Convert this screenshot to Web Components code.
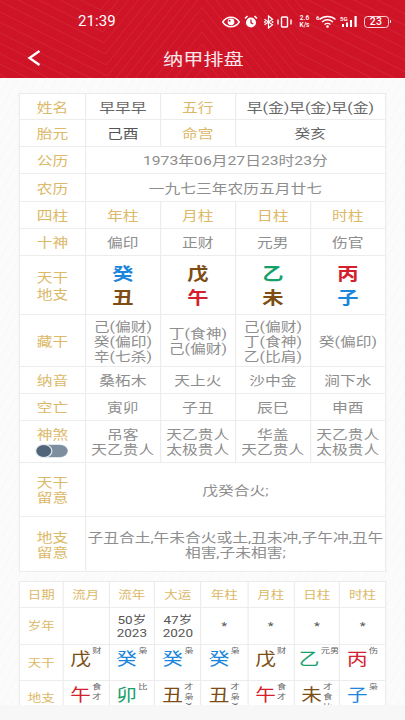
<!DOCTYPE html>
<html lang="zh"><head><meta charset="utf-8">
<style>
html,body{margin:0;padding:0;background:#f8f8f8;font-family:Roboto,"Noto Sans CJK SC","Noto Sans",sans-serif;}
bz-line{display:block;white-space:nowrap}
</style></head>
<body>
<bz-app>
  <bz-header slot="top" title="纳甲排盘"></bz-header>
  <bz-grid cols="51.6px 59px 59px 59px 59px" rows="25px 26px 26px 27px 26px 26px 58px 51px 26px 26px 41px 53px 54px">
    <bz-cell label>姓名</bz-cell><bz-cell dark>早早早</bz-cell><bz-cell label>五行</bz-cell><bz-cell span="2" dark>早(金)早(金)早(金)</bz-cell>
    <bz-cell label>胎元</bz-cell><bz-cell darker>己酉</bz-cell><bz-cell label>命宫</bz-cell><bz-cell span="2" dark>癸亥</bz-cell>
    <bz-cell label>公历</bz-cell><bz-cell span="4">1973年06月27日23时23分</bz-cell>
    <bz-cell label>农历</bz-cell><bz-cell span="4">一九七三年农历五月廿七</bz-cell>
    <bz-cell label>四柱</bz-cell><bz-cell label>年柱</bz-cell><bz-cell label>月柱</bz-cell><bz-cell label>日柱</bz-cell><bz-cell label>时柱</bz-cell>
    <bz-cell label>十神</bz-cell><bz-cell>偏印</bz-cell><bz-cell>正财</bz-cell><bz-cell>元男</bz-cell><bz-cell>伤官</bz-cell>
    <bz-cell label tall><bz-line>天干</bz-line><bz-line>地支</bz-line></bz-cell>
    <bz-cell><bz-pillar top="癸" bottom="丑" tc="water" bc="earth"></bz-pillar></bz-cell>
    <bz-cell><bz-pillar top="戊" bottom="午" tc="earth" bc="fire"></bz-pillar></bz-cell>
    <bz-cell><bz-pillar top="乙" bottom="未" tc="wood" bc="earth"></bz-pillar></bz-cell>
    <bz-cell><bz-pillar top="丙" bottom="子" tc="fire" bc="water"></bz-pillar></bz-cell>
    <bz-cell label>藏干</bz-cell>
    <bz-cell><bz-line>己(偏财)</bz-line><bz-line>癸(偏印)</bz-line><bz-line>辛(七杀)</bz-line></bz-cell>
    <bz-cell><bz-line>丁(食神)</bz-line><bz-line>己(偏财)</bz-line></bz-cell>
    <bz-cell><bz-line>己(偏财)</bz-line><bz-line>丁(食神)</bz-line><bz-line>乙(比肩)</bz-line></bz-cell>
    <bz-cell>癸(偏印)</bz-cell>
    <bz-cell label>纳音</bz-cell><bz-cell>桑柘木</bz-cell><bz-cell>天上火</bz-cell><bz-cell>沙中金</bz-cell><bz-cell>涧下水</bz-cell>
    <bz-cell label>空亡</bz-cell><bz-cell>寅卯</bz-cell><bz-cell>子丑</bz-cell><bz-cell>辰巳</bz-cell><bz-cell>申酉</bz-cell>
    <bz-cell label><bz-line>神煞</bz-line><bz-toggle></bz-toggle></bz-cell>
    <bz-cell><bz-line>吊客</bz-line><bz-line>天乙贵人</bz-line></bz-cell>
    <bz-cell><bz-line>天乙贵人</bz-line><bz-line>太极贵人</bz-line></bz-cell>
    <bz-cell><bz-line>华盖</bz-line><bz-line>天乙贵人</bz-line></bz-cell>
    <bz-cell><bz-line>天乙贵人</bz-line><bz-line>太极贵人</bz-line></bz-cell>
    <bz-cell label><bz-line>天干</bz-line><bz-line>留意</bz-line></bz-cell><bz-cell span="4">戊癸合火;</bz-cell>
    <bz-cell label><bz-line>地支</bz-line><bz-line>留意</bz-line></bz-cell><bz-cell span="4"><bz-line>子丑合土,午未合火或土,丑未冲,子午冲,丑午</bz-line><bz-line>相害,子未相害;</bz-line></bz-cell>
  </bz-grid>
  <bz-grid size="small" cols="33.6px 35.8px 35.8px 35.8px 36.4px 36px 35.8px 35.4px" rows="25px 36px 35px 40px">
    <bz-cell label>日期</bz-cell><bz-cell label>流月</bz-cell><bz-cell label>流年</bz-cell><bz-cell label>大运</bz-cell><bz-cell label>年柱</bz-cell><bz-cell label>月柱</bz-cell><bz-cell label>日柱</bz-cell><bz-cell label>时柱</bz-cell>
    <bz-cell label>岁年</bz-cell><bz-cell></bz-cell>
    <bz-cell darker><bz-line>50岁</bz-line><bz-line>2023</bz-line></bz-cell>
    <bz-cell darker><bz-line>47岁</bz-line><bz-line>2020</bz-line></bz-cell>
    <bz-cell darker>*</bz-cell><bz-cell darker>*</bz-cell><bz-cell darker>*</bz-cell><bz-cell darker>*</bz-cell>
    <bz-cell label>天干</bz-cell>
    <bz-mini c="earth" s="财">戊</bz-mini><bz-mini c="water" s="枭">癸</bz-mini><bz-mini c="water" s="枭">癸</bz-mini><bz-mini c="water" s="枭">癸</bz-mini><bz-mini c="earth" s="财">戊</bz-mini><bz-mini c="wood" s="元男" nudge>乙</bz-mini><bz-mini c="fire" s="伤">丙</bz-mini>
    <bz-cell label low>地支</bz-cell>
    <bz-mini c="fire" s="食 才">午</bz-mini><bz-mini c="wood" s="比">卯</bz-mini><bz-mini c="earth" s="才 枭 杀">丑</bz-mini><bz-mini c="earth" s="才 枭 杀">丑</bz-mini><bz-mini c="fire" s="食 才">午</bz-mini><bz-mini c="earth" s="才 食 比">未</bz-mini><bz-mini c="water" s="枭">子</bz-mini>
  </bz-grid>
</bz-app>
<script>
const COLORS={water:'#1c86dc',earth:'#7d4d14',fire:'#d4202c',wood:'#16a06a'};
function def(name,html,init){
  customElements.define(name,class extends HTMLElement{
    constructor(){super();this.attachShadow({mode:'open'}).innerHTML=html;}
    connectedCallback(){if(init)init(this,this.shadowRoot);}
  });
}
def('bz-app',`<style>
:host{display:block;width:405px;height:720px;overflow:hidden;background:#f7f7f7}
main{display:flex;flex-direction:column;gap:9px;width:324px;height:627px;overflow:hidden;padding:15px 15.2px 0;box-sizing:border-box;
transform:scaleX(1.25);transform-origin:0 0;
background:repeating-linear-gradient(115deg,#fbfbfb 0 6px,#f8f8f8 6px 7px)}
</style><slot name="top"></slot><main><slot></slot></main>`);

def('bz-status',`<style>
:host{display:flex;align-items:center;height:42px;padding:1px 14px 0 78px;color:#fff;box-sizing:border-box}
.t{font:400 15px/1 Roboto,sans-serif;letter-spacing:.1px;flex:1}
.i{display:flex;align-items:center;height:16px}
svg{display:block}
.sp{font:600 6.5px/6.5px Roboto,sans-serif;text-align:center;width:14px;margin:0 4px 0 6px}
.bat{display:flex;align-items:center;margin-left:5px}
.b{box-sizing:border-box;width:25px;height:12px;border:1px solid #ffffffd0;border-radius:3.5px;font:500 10.5px/10px Roboto,sans-serif;text-align:center;letter-spacing:.2px}
.n{width:1.5px;height:3.5px;background:#fff;margin-left:1px;border-radius:0 1px 1px 0}
</style>
<span class="t">21:39</span>
<div class="i">
<svg width="18" height="12" viewBox="0 0 18 12" style="margin-right:4px"><path d="M.7 6C3 2.6 5.8 1.2 9 1.2S15 2.6 17.3 6C15 9.4 12.2 10.8 9 10.8S3 9.4.7 6Z" fill="none" stroke="#fff" stroke-width="1.4"/><circle cx="9" cy="5.8" r="3.4" fill="#fff"/><circle cx="7.6" cy="4.8" r="1" fill="#d01428"/></svg>
<svg width="14" height="14" viewBox="0 0 14 14" style="margin-right:5px"><circle cx="7" cy="7.5" r="5" fill="#fff"/><path d="M1 3.5 3.5 1M13 3.5 10.5 1" stroke="#fff" stroke-width="1.6" fill="none"/><path d="M7 4.5V7.8L9.3 9" stroke="#d01428" stroke-width="1.3" fill="none"/></svg>
<svg width="11" height="14" viewBox="0 0 11 14" style="margin-right:3px"><path d="M1.5 4.2l8 5.6L5.5 13V1l4 3.2L1.5 9.8" fill="none" stroke="#fff" stroke-width="1.2"/><circle cx="2" cy="7" r=".9" fill="#fff"/><circle cx="9.5" cy="7" r=".9" fill="#fff"/></svg>
<svg width="15" height="12" viewBox="0 0 15 12"><rect x="4.5" y="1" width="6" height="10" rx="1" fill="none" stroke="#fff" stroke-width="1.4"/><path d="M1 3.5v5M14 3.5v5" stroke="#fff" stroke-width="1.4"/></svg>
<span class="sp">2.6<br>K/s</span>
<svg width="20" height="13" viewBox="0 0 20 13" style="margin-right:4px"><text x="0" y="5" font-size="6" font-family="Roboto" font-weight="600" fill="#fff">6</text><path d="M3.5 4.5C8 .5 15 .5 19.5 4.5M6 7C9.5 4.2 13.5 4.2 17 7M8.5 9.5C10.5 8 12.5 8 14.5 9.5" fill="none" stroke="#fff" stroke-width="1.4"/><circle cx="11.5" cy="11.5" r="1.3" fill="#fff"/></svg>
<svg width="19" height="13" viewBox="0 0 19 13"><text x="0" y="5.5" font-size="6" font-family="Roboto" font-weight="600" fill="#fff">5G</text><path d="M2 9h2v3H2zM6 7.5h2V12H6zM10 5h2v7h-2zM14.5 1h2.2v11h-2.2z" fill="#fff"/></svg>
<div class="bat"><div class="b">23</div><div class="n"></div></div>
</div>`);

def('bz-header',`<style>
:host{display:block;position:relative;height:78px;background:#d01428;color:#fff;overflow:hidden}
svg.bg{position:absolute;inset:0;width:405px;height:78px}
nav{position:relative;display:flex;align-items:center;justify-content:center;height:32px}
h1{margin:0 0 0 1px;font:400 16.2px/1 "Noto Sans CJK SC",sans-serif;transform:scaleX(1.25);color:#f7e6e8}
button{position:absolute;left:26px;top:7px;width:16px;height:18px;border:0;background:none;padding:0}
bz-status{position:relative}
</style>
<svg class="bg" viewBox="0 0 405 78"></svg>
<bz-status></bz-status>
<nav><button aria-label="返回"><svg width="16" height="18" viewBox="0 0 16 18" style="display:block"><path d="M13.5 2 3.5 9l10 7" fill="none" stroke="#fff" stroke-width="2.3"/></svg></button><h1></h1></nav>`,
(el,r)=>{
  r.querySelector('h1').textContent=el.getAttribute('title');
  let p='';
  for(let i=-6;i<18;i++){
    const y=i*11;
    const jl=103+y*.1, jr=300-y*.1;
    const pts=[[-10,y+32-.5*(jl+10)],[jl,y+32],[202,y+32-1.25*(202-jl)],[jr,y+32-1.25*(202-jl)+1.25*(jr-202)]];
    const e=pts[3];
    pts.push([420,e[1]+.5*(420-e[0])]);
    p+=`<polyline points="${pts.map(q=>q.join(',')).join(' ')}" fill="none" stroke="#fff" stroke-opacity=".07" stroke-width="1"/>`;
  }
  r.querySelector('svg.bg').innerHTML=p;
});

def('bz-grid',`<style>
:host{display:grid;gap:1px;padding:1px;background:#ececec;width:293.6px;box-sizing:border-box;flex:none;font-size:12.6px;line-height:15px}
:host([size="small"]){font-size:10.8px;line-height:13px}
</style><slot></slot>`,(el)=>{
  el.style.gridTemplateColumns=el.getAttribute('cols');
  el.style.gridTemplateRows=el.getAttribute('rows');
});

def('bz-cell',`<style>
:host{display:flex;flex-direction:column;align-items:center;justify-content:center;background:#fff;color:#8e8e8e;text-align:center;min-width:0;overflow:hidden;padding-top:1.5px;box-sizing:border-box}
:host([label]){color:#dcb968}
:host([dark]){color:#666}
:host([darker]){color:#555}
:host([tall]){line-height:17px}
:host([span="2"]){grid-column:span 2}
:host([span="4"]){grid-column:span 4}
:host([low]){justify-content:flex-start;padding-top:11px}
</style><div><slot></slot></div>`);

def('bz-pillar',`<style>
:host{display:flex;flex-direction:column;align-items:center;font-size:17px;line-height:24px;font-weight:700}
</style><span class="a"></span><span class="b"></span>`,(el,r)=>{
  const a=r.querySelector('.a'),b=r.querySelector('.b');
  a.textContent=el.getAttribute('top');a.style.color=COLORS[el.getAttribute('tc')];
  b.textContent=el.getAttribute('bottom');b.style.color=COLORS[el.getAttribute('bc')];
});

def('bz-toggle',`<style>
:host{display:block;position:relative;width:25px;height:12px;margin:3px auto 0;background:#7d8e9e;border-radius:6px;box-shadow:0 0 0 .5px #c8d0d8}
i{position:absolute;left:0;top:0;width:12px;height:12px;border-radius:50%;background:#51657a;box-shadow:0 0 0 1px #e8ecef}
</style><i></i>`);

def('bz-mini',`<style>
:host{display:flex;justify-content:center;align-items:flex-start;gap:1px;background:#fff;overflow:hidden;min-width:0}
.c{font-size:16.5px;line-height:30px}
.s{font-size:7.4px;line-height:10px;color:#666;margin-top:1px;display:flex;flex-direction:column;align-items:center}
:host([nudge]){justify-content:flex-end}
</style><span class="c"><slot></slot></span><span class="s"></span>`,(el,r)=>{
  r.querySelector('.c').style.color=COLORS[el.getAttribute('c')];
  r.querySelector('.s').innerHTML=el.getAttribute('s').split(' ').map(t=>`<span>${t}</span>`).join('');
});
</script>
</body></html>
